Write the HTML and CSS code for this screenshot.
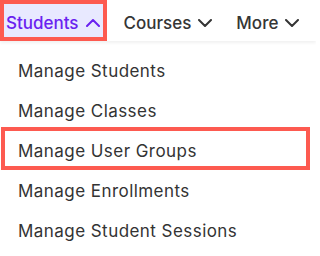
FILE: index.html
```html
<!DOCTYPE html>
<html lang="en">
<head>
<meta charset="utf-8">
<title>Menu</title>
<link rel="stylesheet" href="styles.css">
</head>
<body>
<nav class="nav">
  <div class="nav-item active">
    <span class="nav-label">Students</span>
    <svg class="chev" width="14" height="8" viewBox="0 0 14 8"><path d="M1 7 L7 1 L13 7" fill="none" stroke="currentColor" stroke-width="2" stroke-linecap="round" stroke-linejoin="round"/></svg>
  </div>
  <div class="nav-item">
    <span class="nav-label">Courses</span>
    <svg class="chev" width="14" height="8" viewBox="0 0 14 8"><path d="M1 1 L7 7 L13 1" fill="none" stroke="currentColor" stroke-width="2" stroke-linecap="round" stroke-linejoin="round"/></svg>
  </div>
  <div class="nav-item">
    <span class="nav-label">More</span>
    <svg class="chev" width="14" height="8" viewBox="0 0 14 8"><path d="M1 1 L7 7 L13 1" fill="none" stroke="currentColor" stroke-width="2" stroke-linecap="round" stroke-linejoin="round"/></svg>
  </div>
</nav>
<ul class="menu">
  <li class="menu-item">Manage Students</li>
  <li class="menu-item">Manage Classes</li>
  <li class="menu-item highlight">Manage User Groups</li>
  <li class="menu-item">Manage Enrollments</li>
  <li class="menu-item">Manage Student Sessions</li>
</ul>
</body>
</html>
```
FILE: styles.css
```css
* { box-sizing: border-box; }
html, body {
  margin: 0;
  padding: 0;
  background: #ffffff;
}
body {
  font-family: Inter, "Noto Sans", sans-serif;
  color: #353535;
  width: 316px;
  height: 256px;
  overflow: hidden;
}
.nav {
  display: flex;
  gap: 11px;
  height: 41px;
  box-shadow: 0 2px 3px rgba(0, 0, 0, 0.06);
  position: relative;
}
.nav-item {
  display: flex;
  align-items: flex-start;
  gap: 7px;
  height: 41px;
  border: 4px solid transparent;
  padding: 9px 3px 0 2px;
  font-size: 17px;
  font-weight: 500;
  line-height: 20px;
  color: #353535;
}
.nav-item.active {
  border-color: #fd5a50;
  background: #e8e9ff;
  color: #6a22f0;
}
.chev {
  margin-top: 6px;
  flex: none;
}
.menu {
  list-style: none;
  margin: 0;
  padding: 10px 0 0 0;
}
.menu-item {
  position: relative;
  height: 40px;
  padding: 10px 0 10px 18px;
  font-size: 17px;
  font-weight: 400;
  letter-spacing: 0.45px;
  line-height: 20px;
  color: #333333;
}
.menu-item.highlight::after {
  content: "";
  position: absolute;
  top: -4px;
  bottom: 1px;
  left: 1px;
  right: 6px;
  border: 4px solid #fd5a50;
}
```
